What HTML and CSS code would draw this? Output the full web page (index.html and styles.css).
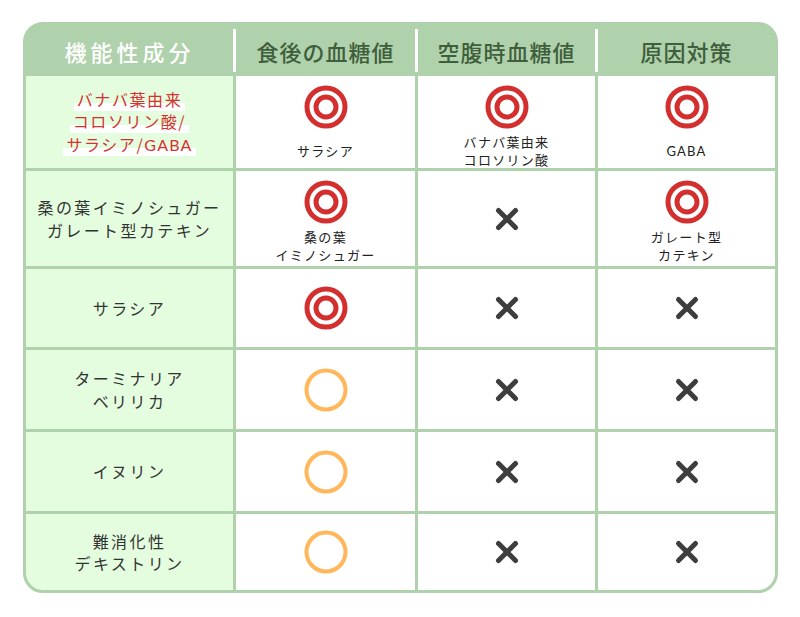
FILE: index.html
```html
<!DOCTYPE html>
<html lang="ja">
<head>
<meta charset="utf-8">
<title>機能性成分</title>
<link rel="stylesheet" href="styles.css">
</head>
<body>
<svg class="defs" width="0" height="0" aria-hidden="true">
  <defs>
    <symbol id="dbl" viewBox="0 0 44 44">
      <circle cx="22" cy="22" r="19" fill="none" stroke="#d42f2f" stroke-width="5"/>
      <circle cx="22" cy="22" r="10" fill="none" stroke="#d42f2f" stroke-width="5"/>
    </symbol>
    <symbol id="sgl" viewBox="0 0 44 44">
      <circle cx="22" cy="22" r="19.5" fill="none" stroke="#ffb75a" stroke-width="4"/>
    </symbol>
    <symbol id="crs" viewBox="0 0 26 26">
      <path d="M4.5 4.5 L21.5 21.5 M21.5 4.5 L4.5 21.5" stroke="#3d3d3d" stroke-width="5" stroke-linecap="round" fill="none"/>
    </symbol>
  </defs>
</svg>
<div class="chart">
  <div class="hcell hfirst">機能性成分</div>
  <div class="hcell sep">食後の血糖値</div>
  <div class="hcell sep">空腹時血糖値</div>
  <div class="hcell sep">原因対策</div>

  <div class="name red"><p class="txt"><span class="mark">バナバ葉由来</span><br><span class="mark">コロソリン酸/</span><br><span class="mark">サラシア/<span class="lat">GABA</span></span></p></div>
  <div class="cell top"><svg class="ic"><use href="#dbl"/></svg><div class="lbl"><p class="txt">サラシア</p></div></div>
  <div class="cell top"><svg class="ic"><use href="#dbl"/></svg><div class="lbl"><p class="txt">バナバ葉由来<br>コロソリン酸</p></div></div>
  <div class="cell top"><svg class="ic"><use href="#dbl"/></svg><div class="lbl"><p class="txt lat">GABA</p></div></div>

  <div class="name"><p class="txt">桑の葉イミノシュガー<br>ガレート型カテキン</p></div>
  <div class="cell top"><svg class="ic"><use href="#dbl"/></svg><div class="lbl"><p class="txt">桑の葉<br>イミノシュガー</p></div></div>
  <div class="cell"><svg class="x"><use href="#crs"/></svg></div>
  <div class="cell top"><svg class="ic"><use href="#dbl"/></svg><div class="lbl"><p class="txt">ガレート型<br>カテキン</p></div></div>

  <div class="name"><p class="txt">サラシア</p></div>
  <div class="cell"><svg class="ic"><use href="#dbl"/></svg></div>
  <div class="cell"><svg class="x"><use href="#crs"/></svg></div>
  <div class="cell"><svg class="x"><use href="#crs"/></svg></div>

  <div class="name"><p class="txt">ターミナリア<br>ベリリカ</p></div>
  <div class="cell"><svg class="ic"><use href="#sgl"/></svg></div>
  <div class="cell"><svg class="x"><use href="#crs"/></svg></div>
  <div class="cell"><svg class="x"><use href="#crs"/></svg></div>

  <div class="name"><p class="txt">イヌリン</p></div>
  <div class="cell"><svg class="ic"><use href="#sgl"/></svg></div>
  <div class="cell"><svg class="x"><use href="#crs"/></svg></div>
  <div class="cell"><svg class="x"><use href="#crs"/></svg></div>

  <div class="name"><p class="txt">難消化性<br>デキストリン</p></div>
  <div class="cell"><svg class="ic"><use href="#sgl"/></svg></div>
  <div class="cell"><svg class="x"><use href="#crs"/></svg></div>
  <div class="cell"><svg class="x"><use href="#crs"/></svg></div>
</div>
</body>
</html>
```
FILE: styles.css
```css
html, body {
  margin: 0;
  background: #ffffff;
}
body {
  padding: 22px 0 0 23px;
  font-family: "Noto Sans CJK JP", "Noto Sans", sans-serif;
  color: #333333;
}
.defs {
  display: block;
  width: 0;
  height: 0;
  overflow: hidden;
}
.chart {
  display: grid;
  width: max-content;
  grid-template-columns: 207px 179px 177px 177px;
  grid-template-rows: 48px 92px 95px 78px 79px 79px 76px;
  gap: 3px;
  background: #afd1ab;
  border: 3px solid #afd1ab;
  border-radius: 20px;
  overflow: hidden;
}
.hcell {
  position: relative;
  display: flex;
  align-items: center;
  justify-content: center;
  padding-top: 4px;
  font-size: 22px;
  font-weight: 500;
  letter-spacing: 1px;
  color: #3f5e3c;
}
.hfirst {
  color: #ffffff;
  letter-spacing: 4px;
}
.sep::before {
  content: "";
  position: absolute;
  left: -3px;
  top: 4px;
  bottom: 1px;
  width: 3px;
  background: #ffffff;
}
.txt {
  margin: 0;
}
.name {
  background: #e4fddf;
  display: flex;
  align-items: center;
  justify-content: center;
  text-align: center;
  font-size: 16px;
  line-height: 22.5px;
  letter-spacing: 2.4px;
  color: #333333;
}
.red {
  color: #d43232;
  letter-spacing: 1.6px;
}
.mark {
  padding: 0 3px;
  background: linear-gradient(transparent 68%, #ffffff 68%);
}
.lat {
  font-family: "Lato", "Open Sans", sans-serif;
  letter-spacing: 1.2px;
}
.cell {
  background: #ffffff;
  display: flex;
  flex-direction: column;
  align-items: center;
  justify-content: center;
}
.cell.top {
  justify-content: flex-start;
  padding-top: 9px;
}
.ic {
  width: 44px;
  height: 44px;
  flex: none;
}
.x {
  width: 26px;
  height: 26px;
  flex: none;
}
.lbl {
  margin-top: 4px;
  height: 36px;
  display: flex;
  align-items: center;
  justify-content: center;
  text-align: center;
  font-size: 13px;
  line-height: 18px;
  letter-spacing: 1.3px;
  color: #222222;
}
```
